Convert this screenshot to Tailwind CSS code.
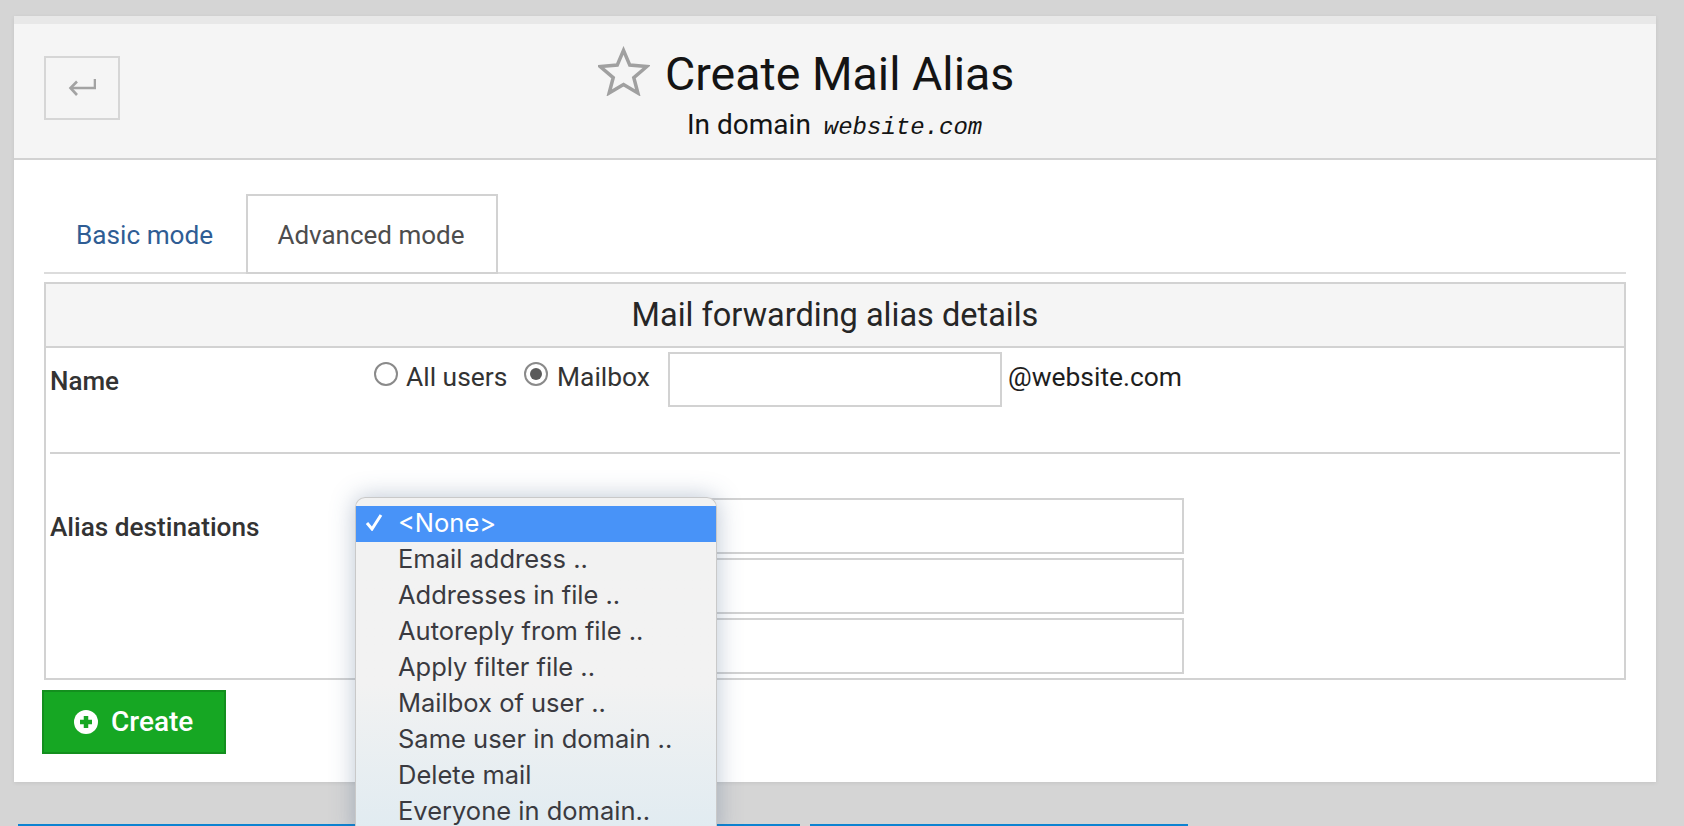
<!DOCTYPE html>
<html lang="en">
<head>
  <meta charset="UTF-8" />
  <title>Create Mail Alias</title>
  <script src="https://cdn.jsdelivr.net/npm/@tailwindcss/browser@4"></script>
</head>
<body class="bg-[#d5d5d5] h-[826px] overflow-hidden font-['Roboto',sans-serif] relative">
  <div class="pt-4 pl-[14px] pr-7">
    <!-- PANEL -->
    <div class="bg-white h-[766px] shadow-[0_1px_4px_rgba(0,0,0,0.08)]">
      <!-- HEADER -->
      <header class="h-[144px] bg-[#f5f5f5] border-t-8 border-t-[#e8e8e8] border-b-2 border-b-[#d2d2d2] flex">
        <button class="ml-[30px] mt-8 w-[76px] h-[64px] border-2 border-[#d6d6d6] flex items-center justify-center">
          <svg class="w-[28px] h-[20px]" viewBox="0 0 28 20" fill="none" stroke="#a3a3a3" stroke-width="2.6">
            <path d="M27 1v9H3" />
            <path d="M9 3.5L2.5 10 9 17" />
          </svg>
        </button>
        <div class="ml-[478px] w-[440px]">
          <div class="flex items-center gap-[15px] mt-[21px] h-[56px]">
            <svg class="w-[52px] h-[50px] shrink-0 -mt-[5px]" viewBox="0 0 53 50" fill="none" stroke="#a0a0a0" stroke-width="3.6" stroke-linejoin="miter">
              <path d="M26 4l6.4 15 17.4 1.4-13.3 11.4 4.1 15.6-14.6-8.6-14.6 8.6 4.1-15.6L2.2 20.4l17.4-1.4z" />
            </svg>
            <h1 class="text-[46.5px] leading-none mt-[3px] text-[#141414] whitespace-nowrap">Create Mail Alias</h1>
          </div>
          <p class="pl-[89px] mt-[8px] text-[28px] leading-8 text-[#141414] whitespace-nowrap">In domain <span class="font-['Liberation_Mono',monospace] italic text-[24px] ml-[6px]">website.com</span></p>
        </div>
      </header>

      <main class="px-[30px]">
        <!-- TABS -->
        <nav class="flex mt-[34px] h-[80px] border-b-2 border-[#dcdcdc]">
          <a class="w-[202px] pl-[32px] pt-[22px] text-[26.2px] text-[#2f5d94]">Basic mode</a>
          <a class="w-[252px] h-[80px] border-2 border-[#d2d2d2] bg-white text-center pt-[20px] pr-[2px] text-[26px] text-[#4d4d4d]">Advanced mode</a>
        </nav>

        <!-- TABLE -->
        <section class="mt-2 border-2 border-[#d2d2d2] h-[398px]">
          <h2 class="h-[64px] bg-[#f5f5f5] border-b-2 border-[#d2d2d2] text-center text-[32.5px] leading-[62px] text-[#262626]">Mail forwarding alias details</h2>
          <div class="px-1">
            <div class="flex h-[106px] border-b-2 border-[#d2d2d2]">
              <b class="w-[324px] pt-[14px] text-[26px] font-medium text-[#333]">Name</b>
              <div class="flex h-[55px] mt-[4px] text-[26.4px] text-[#333]">
                <span class="w-[24px] h-[24px] mt-[10px] rounded-full border-2 border-[#8a8a8a] bg-white"></span>
                <span class="ml-[8px] mt-[6px] w-[118px]">All users</span>
                <span class="w-[24px] h-[24px] mt-[10px] rounded-full border-2 border-[#8a8a8a] bg-white flex items-center justify-center"><span class="w-[12px] h-[12px] rounded-full bg-[#5a5a5a]"></span></span>
                <span class="ml-[9px] mt-[6px] w-[111px]">Mailbox</span>
                <input class="w-[334px] h-[55px] border-2 border-[#d2d2d2] bg-white" />
                <span class="ml-[6px] mt-[6px] text-[#1e1e1e]">@website.com</span>
              </div>
            </div>
            <div class="flex pt-[44px]">
              <b class="w-[323px] pt-[10px] text-[26.2px] font-medium text-[#333]">Alias destinations</b>
              <div class="flex flex-col gap-[4px] ml-[-6px]">
                <input class="w-[817px] h-[56px] border-2 border-[#d2d2d2] bg-white" />
                <input class="w-[817px] h-[56px] border-2 border-[#d2d2d2] bg-white" />
                <input class="w-[817px] h-[56px] border-2 border-[#d2d2d2] bg-white" />
              </div>
            </div>
          </div>
        </section>

        <!-- CREATE -->
        <button class="mt-[10px] -ml-[2px] w-[184px] h-[64px] bg-[#16a723] border-2 border-[#138f1e] flex items-center pl-[30px] text-[28px] font-medium text-white">
          <svg class="w-[24px] h-[24px] mr-[13px]" viewBox="0 0 24 24">
            <circle cx="12" cy="12" r="12" fill="#fff" />
            <path d="M12 6v12M6 12h12" stroke="#16a723" stroke-width="4.5" />
          </svg>
          Create
        </button>
      </main>
    </div>

    <!-- BOTTOM BARS -->
    <div class="flex mt-[42px] ml-[4px] gap-[10px]">
      <div class="w-[782px] h-1 bg-[#0d83d1]"></div>
      <div class="w-[378px] h-1 bg-[#0d83d1]"></div>
    </div>
  </div>

  <!-- SELECT MENU -->
  <ul class="absolute left-[355px] top-[497px] w-[362px] h-[340px] pt-2 rounded-t-[10px] border border-[#c9c9c9] border-b-0 bg-gradient-to-b from-[#f2f2f2] from-55% to-[#e0ebf1] shadow-[0_0_24px_rgba(60,90,130,0.35)] font-['Inter',sans-serif] text-[25.5px] leading-[36px] text-[#3a3a40]">
    <li class="relative bg-[#4893f8] text-white pl-[42px] h-[36px]">
      <svg class="absolute left-[9px] top-[7px] w-[20px] h-[18px]" viewBox="0 0 20 18" fill="none" stroke="#fff" stroke-width="3"><path d="M2 10l5 6L16 2" /></svg>
      <span class="block -translate-y-px">&lt;None&gt;</span>
    </li>
    <li class="pl-[42px] -translate-y-px">Email address ..</li>
    <li class="pl-[42px] -translate-y-px">Addresses in file ..</li>
    <li class="pl-[42px] -translate-y-px">Autoreply from file ..</li>
    <li class="pl-[42px] -translate-y-px">Apply filter file ..</li>
    <li class="pl-[42px] -translate-y-px">Mailbox of user ..</li>
    <li class="pl-[42px] -translate-y-px">Same user in domain ..</li>
    <li class="pl-[42px] -translate-y-px">Delete mail</li>
    <li class="pl-[42px] -translate-y-px">Everyone in domain..</li>
  </ul>
</body>
</html>
